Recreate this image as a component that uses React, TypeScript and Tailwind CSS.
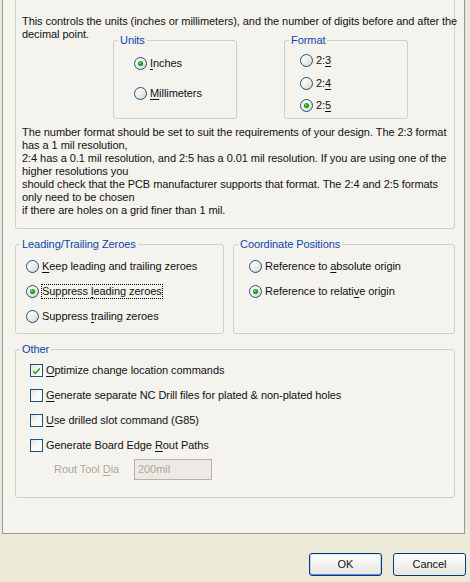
import React from "react";

function Radio({ checked }: { checked?: boolean }) {
  return (
    <svg width="13" height="13" viewBox="0 0 13 13" className="shrink-0">
      <circle cx="6.5" cy="6.5" r="6" fill="url(#xpRadioFill)" stroke="#1C5180" strokeWidth="1" />
      {checked && (
        <>
          <circle cx="6.5" cy="6.5" r="2.6" fill="#21A121" />
          <circle cx="5.9" cy="5.9" r="1" fill="#7BD77B" />
        </>
      )}
    </svg>
  );
}

function Check({ checked }: { checked?: boolean }) {
  return (
    <svg width="13" height="13" viewBox="0 0 13 13" className="shrink-0">
      <rect x="0.5" y="0.5" width="12" height="12" fill="url(#xpBoxFill)" stroke="#1C5180" strokeWidth="1" />
      {checked && (
        <path d="M3 6 L5.2 8.3 L10 3.4 L10 5.6 L5.2 10.4 L3 8.2 Z" fill="#21A121" />
      )}
    </svg>
  );
}

function U({ children }: { children: React.ReactNode }) {
  return <span className="underline underline-offset-[2px]">{children}</span>;
}

function RadioRow({ checked, children, focus }: { checked?: boolean; children: React.ReactNode; focus?: boolean }) {
  return (
    <div className="flex items-center h-[13px]">
      <Radio checked={checked} />
      <span className={"ml-[3px] whitespace-nowrap" + (focus ? " outline outline-1 outline-dotted outline-black" : "")}>{children}</span>
    </div>
  );
}

function CheckRow({ checked, children }: { checked?: boolean; children: React.ReactNode }) {
  return (
    <div className="flex items-center h-[13px]">
      <Check checked={checked} />
      <span className="ml-[3px] whitespace-nowrap">{children}</span>
    </div>
  );
}

function Legend({ children }: { children: React.ReactNode }) {
  return <legend className="ml-[4px] px-[2px] text-[#0E44A8] leading-[13px]">{children}</legend>;
}

export default function App() {
  return (
    <div className="w-[470px] h-[582px] bg-[#ECE9D8] overflow-hidden font-['Liberation_Sans',Arial,sans-serif] text-[11px] leading-[13px] tracking-[-0.06px] text-[#111]">
      <svg width="0" height="0" className="absolute">
        <defs>
          <linearGradient id="xpRadioFill" x1="0" y1="0" x2="1" y2="1">
            <stop offset="0" stopColor="#FFFFFF" />
            <stop offset="0.5" stopColor="#F0F0EA" />
            <stop offset="1" stopColor="#CFCFC6" />
          </linearGradient>
          <linearGradient id="xpBoxFill" x1="0" y1="0" x2="1" y2="1">
            <stop offset="0" stopColor="#DCDCD7" />
            <stop offset="0.4" stopColor="#F5F5F2" />
            <stop offset="1" stopColor="#FFFFFF" />
          </linearGradient>
        </defs>
      </svg>

      <div className="ml-[2px] w-[463px] h-[534px] border-x border-b border-[#919B9C] bg-[#F4F3EE] pl-[12px] pr-[9px] flex flex-col">
        {/* top group (top border cut off) */}
        <div className="border-x border-b border-[#D0D0BF] rounded-b-[3px] pl-[6px] pt-[15px] pb-[11px]">
          <div className="whitespace-nowrap">This controls the units (inches or millimeters), and the number of digits before and after the</div>
          <div className="flex">
            <div className="w-[91px] whitespace-nowrap">decimal point.</div>
            <fieldset className="mt-[6px] w-[124px] h-[85px] border border-[#D0D0BF] rounded-[3px] p-0">
              <Legend>Units</Legend>
              <div className="pl-[20px] pt-[10px] flex flex-col gap-[17px]">
                <RadioRow checked><U>I</U>nches</RadioRow>
                <RadioRow><U>M</U>illimeters</RadioRow>
              </div>
            </fieldset>
            <fieldset className="mt-[6px] ml-[47px] w-[124px] h-[85px] border border-[#D0D0BF] rounded-[3px] p-0">
              <Legend>Format</Legend>
              <div className="pl-[15px] pt-[7px] flex flex-col gap-[9.5px]">
                <RadioRow>2:<U>3</U></RadioRow>
                <RadioRow>2:<U>4</U></RadioRow>
                <RadioRow checked>2:<U>5</U></RadioRow>
              </div>
            </fieldset>
          </div>
          <div className="mt-[7px] whitespace-nowrap">
            <div>The number format should be set to suit the requirements of your design. The 2:3 format</div>
            <div>has a 1 mil resolution,</div>
            <div>2:4 has a 0.1 mil resolution, and 2:5 has a 0.01 mil resolution. If you are using one of the</div>
            <div>higher resolutions you</div>
            <div>should check that the PCB manufacturer supports that format. The 2:4 and 2:5 formats</div>
            <div>only need to be chosen</div>
            <div>if there are holes on a grid finer than 1 mil.</div>
          </div>
        </div>

        {/* second row */}
        <div className="flex mt-[9px]">
          <fieldset className="w-[209px] h-[96px] border border-[#D0D0BF] rounded-[3px] p-0">
            <Legend>Leading/Trailing Zeroes</Legend>
            <div className="pl-[10px] pt-[9px] flex flex-col gap-[12px]">
              <RadioRow><U>K</U>eep leading and trailing zeroes</RadioRow>
              <RadioRow checked focus>Suppress <U>l</U>eading zeroes</RadioRow>
              <RadioRow>Suppress <U>t</U>railing zeroes</RadioRow>
            </div>
          </fieldset>
          <fieldset className="ml-[9px] w-[222px] h-[96px] border border-[#D0D0BF] rounded-[3px] p-0">
            <Legend>Coordinate Positions</Legend>
            <div className="pl-[15px] pt-[9px] flex flex-col gap-[12px]">
              <RadioRow>Reference to <U>a</U>bsolute origin</RadioRow>
              <RadioRow checked>Reference to relati<U>v</U>e origin</RadioRow>
            </div>
          </fieldset>
        </div>

        {/* Other */}
        <fieldset className="mt-[9px] w-[440px] h-[155px] border border-[#D0D0BF] rounded-[3px] p-0">
          <Legend>Other</Legend>
          <div className="pl-[14px] pt-[8px] flex flex-col gap-[12px]">
            <CheckRow checked><U>O</U>ptimize change location commands</CheckRow>
            <CheckRow><U>G</U>enerate separate NC Drill files for plated &amp; non-plated holes</CheckRow>
            <CheckRow><U>U</U>se drilled slot command (G85)</CheckRow>
            <CheckRow>Generate Board Edge <U>R</U>out Paths</CheckRow>
          </div>
          <div className="flex items-center pl-[38px] mt-[7px]">
            <span className="w-[80px] text-[#ACA899] whitespace-nowrap">Rout Tool <U>D</U>ia</span>
            <div className="w-[78px] h-[21px] border border-[#B5B3A8] bg-[#EBEAE4] text-[#ACA899] pl-[3px] flex items-center">200mil</div>
          </div>
        </fieldset>
      </div>

      {/* buttons */}
      <div className="flex justify-end gap-[11px] pr-[4px] mt-[19px]">
        <button className="w-[73px] h-[23px] rounded-[3px] border border-[#003C74] bg-gradient-to-b from-white to-[#E6E5DE] shadow-[inset_0_1px_0_#CEE7FF,inset_0_-1px_0_#6982EE,inset_1px_0_0_#B9D1FC,inset_-1px_0_0_#B9D1FC]">OK</button>
        <button className="w-[73px] h-[23px] rounded-[3px] border border-[#003C74] bg-gradient-to-b from-white to-[#E6E5DE]">Cancel</button>
      </div>
    </div>
  );
}
